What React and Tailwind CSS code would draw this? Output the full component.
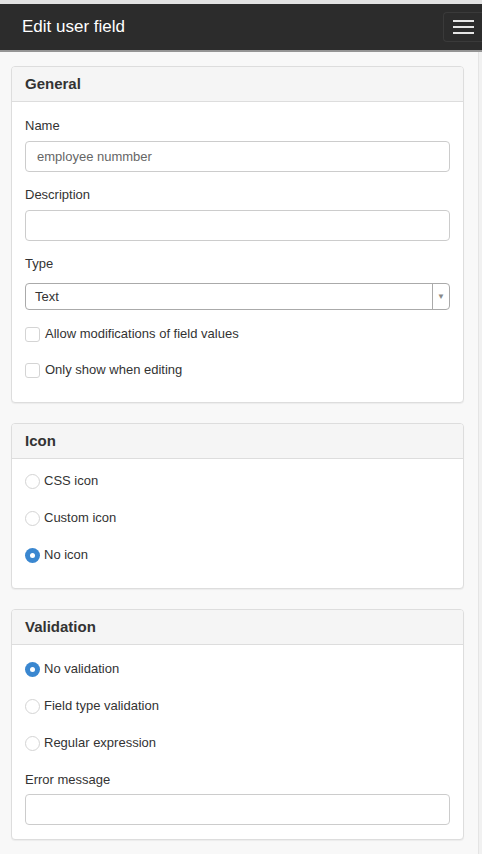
import React from 'react';

const font = { fontFamily: '"Liberation Sans", Arial, sans-serif' };

const Panel = ({ title, children, className = '' }) => (
  <div className="bg-white border border-[#dddddd] rounded-[4px] shadow-[0_1px_1px_rgba(0,0,0,0.05)] overflow-hidden">
    <div className="h-[35px] bg-[#f5f5f5] border-b border-[#dddddd] px-[13px] flex items-center text-[15px] font-bold text-[#333]">
      {title}
    </div>
    <div className={`px-[13px] ${className}`}>{children}</div>
  </div>
);

const Label = ({ children }) => (
  <div className="h-[20px] flex items-center text-[13px] text-[#333]">{children}</div>
);

const TextInput = ({ value = '' }) => (
  <div className="h-[31px] border border-[#cccccc] rounded-[4px] px-[11px] flex items-center text-[13px] text-[#666]">
    {value}
  </div>
);

const Checkbox = ({ label }) => (
  <div className="h-[20px] flex items-center gap-[5px] text-[13px] text-[#333]">
    <span className="w-[15px] h-[15px] border border-[#d4d4d4] rounded-[3px] bg-white" />
    {label}
  </div>
);

const Radio = ({ label, checked }) => (
  <div className="h-[20px] flex items-center gap-[4px] text-[13px] text-[#333]">
    {checked ? (
      <span className="w-[15px] h-[15px] rounded-full bg-[#3a87d0] flex items-center justify-center">
        <span className="w-[5px] h-[5px] rounded-full bg-white" />
      </span>
    ) : (
      <span className="w-[15px] h-[15px] rounded-full border border-[#d4d4d4] bg-white" />
    )}
    {label}
  </div>
);

export default function App() {
  return (
    <div className="min-h-screen bg-[#f8f8f8] flex flex-col" style={font}>
      <div className="h-[4px] bg-[#e2e2e2]" />
      <header className="h-[48px] bg-[#2c2c2c] border-b-2 border-[#959595] flex items-center justify-between pl-[22px] overflow-hidden">
        <span className="text-[17px] text-white">Edit user field</span>
        <button className="h-[30px] w-[39px] border border-r-0 border-[#3a3a3a] rounded-l-[4px] flex flex-col items-start justify-center gap-[4px] pl-[9px]">
          <span className="block w-[21px] h-[2px] bg-[#e6e6e6]" />
          <span className="block w-[21px] h-[2px] bg-[#e6e6e6]" />
          <span className="block w-[21px] h-[2px] bg-[#e6e6e6]" />
        </button>
      </header>

      <div className="flex flex-1">
        <main className="flex-1 pl-[11px] pr-[14px] pt-[14px] pb-[14px] flex flex-col gap-[20px]">
          <Panel title="General" className="pt-[14px] pb-[22px]">
            <Label>Name</Label>
            <div className="mt-[5px]">
              <TextInput value="employee nummber" />
            </div>
            <div className="mt-[13px]">
              <Label>Description</Label>
            </div>
            <div className="mt-[5px]">
              <TextInput />
            </div>
            <div className="mt-[13px]">
              <Label>Type</Label>
            </div>
            <div className="mt-[9px] h-[27px] border border-[#aaaaaa] rounded-[4px] flex items-center text-[13px] text-[#333]">
              <span className="flex-1 pl-[9px]">Text</span>
              <span className="w-[17px] h-full border-l border-[#aaaaaa] flex items-center justify-center text-[8px] text-[#888]">
                ▼
              </span>
            </div>
            <div className="mt-[14px] flex flex-col gap-[16px]">
              <Checkbox label="Allow modifications of field values" />
              <Checkbox label="Only show when editing" />
            </div>
          </Panel>

          <Panel title="Icon" className="pt-[12px] pb-[23px] flex flex-col gap-[17px]">
            <Radio label="CSS icon" />
            <Radio label="Custom icon" />
            <Radio label="No icon" checked />
          </Panel>

          <Panel title="Validation" className="pt-[14px] pb-[14px]">
            <div className="flex flex-col gap-[17px]">
              <Radio label="No validation" checked />
              <Radio label="Field type validation" />
              <Radio label="Regular expression" />
            </div>
            <div className="mt-[17px]">
              <Label>Error message</Label>
            </div>
            <div className="mt-[4px]">
              <TextInput />
            </div>
          </Panel>
        </main>
        <div className="w-[4px] bg-[#f1f1f1] border-l border-[#e4e4e4]" />
      </div>
    </div>
  );
}
